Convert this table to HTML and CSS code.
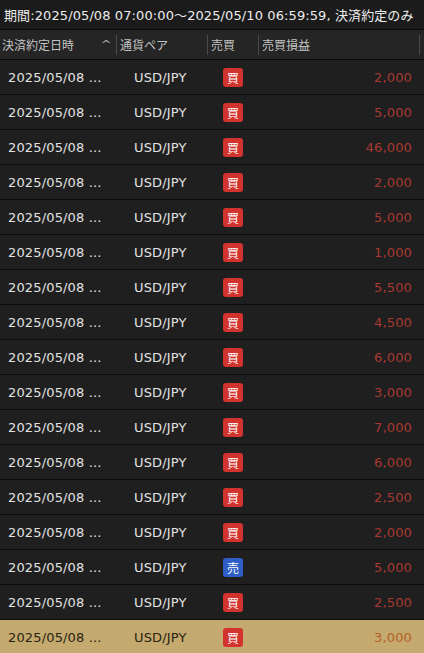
FILE: index.html
```html
<!DOCTYPE html>
<html lang="ja">
<head>
<meta charset="utf-8">
<link rel="stylesheet" href="styles.css">
</head>
<body>
<div class="period">期間:2025/05/08 07:00:00～2025/05/10 06:59:59, 決済約定のみ</div>
<div class="head">
  <div class="hc c1"><span>決済約定日時</span><span class="caret">^</span></div>
  <div class="hc c2">通貨ペア</div>
  <div class="hc c3">売買</div>
  <div class="hc c4">売買損益</div>
</div>
<div class="rows">
  <div class="row"><span class="date">2025/05/08 ...</span><span class="pair">USD/JPY</span><span class="side"><i class="badge buy">買</i></span><span class="pl">2,000</span></div>
  <div class="row"><span class="date">2025/05/08 ...</span><span class="pair">USD/JPY</span><span class="side"><i class="badge buy">買</i></span><span class="pl">5,000</span></div>
  <div class="row"><span class="date">2025/05/08 ...</span><span class="pair">USD/JPY</span><span class="side"><i class="badge buy">買</i></span><span class="pl">46,000</span></div>
  <div class="row"><span class="date">2025/05/08 ...</span><span class="pair">USD/JPY</span><span class="side"><i class="badge buy">買</i></span><span class="pl">2,000</span></div>
  <div class="row"><span class="date">2025/05/08 ...</span><span class="pair">USD/JPY</span><span class="side"><i class="badge buy">買</i></span><span class="pl">5,000</span></div>
  <div class="row"><span class="date">2025/05/08 ...</span><span class="pair">USD/JPY</span><span class="side"><i class="badge buy">買</i></span><span class="pl">1,000</span></div>
  <div class="row"><span class="date">2025/05/08 ...</span><span class="pair">USD/JPY</span><span class="side"><i class="badge buy">買</i></span><span class="pl">5,500</span></div>
  <div class="row"><span class="date">2025/05/08 ...</span><span class="pair">USD/JPY</span><span class="side"><i class="badge buy">買</i></span><span class="pl">4,500</span></div>
  <div class="row"><span class="date">2025/05/08 ...</span><span class="pair">USD/JPY</span><span class="side"><i class="badge buy">買</i></span><span class="pl">6,000</span></div>
  <div class="row"><span class="date">2025/05/08 ...</span><span class="pair">USD/JPY</span><span class="side"><i class="badge buy">買</i></span><span class="pl">3,000</span></div>
  <div class="row"><span class="date">2025/05/08 ...</span><span class="pair">USD/JPY</span><span class="side"><i class="badge buy">買</i></span><span class="pl">7,000</span></div>
  <div class="row"><span class="date">2025/05/08 ...</span><span class="pair">USD/JPY</span><span class="side"><i class="badge buy">買</i></span><span class="pl">6,000</span></div>
  <div class="row"><span class="date">2025/05/08 ...</span><span class="pair">USD/JPY</span><span class="side"><i class="badge buy">買</i></span><span class="pl">2,500</span></div>
  <div class="row"><span class="date">2025/05/08 ...</span><span class="pair">USD/JPY</span><span class="side"><i class="badge buy">買</i></span><span class="pl">2,000</span></div>
  <div class="row"><span class="date">2025/05/08 ...</span><span class="pair">USD/JPY</span><span class="side"><i class="badge sell">売</i></span><span class="pl">5,000</span></div>
  <div class="row"><span class="date">2025/05/08 ...</span><span class="pair">USD/JPY</span><span class="side"><i class="badge buy">買</i></span><span class="pl">2,500</span></div>
  <div class="row selected"><span class="date">2025/05/08 ...</span><span class="pair">USD/JPY</span><span class="side"><i class="badge buy">買</i></span><span class="pl">3,000</span></div>
</div>
</body>
</html>
```

FILE: styles.css
```css
html, body {
  margin: 0;
  padding: 0;
  background: #1e1e1e;
  overflow: hidden;
}
body {
  font-family: "DejaVu Sans", "Noto Sans CJK JP", sans-serif;
  color: #e2e2e2;
  width: 424px;
}
.period {
  height: 29px;
  border-bottom: 1px solid #0a0a0a;
  background: #1b1b1b;
  display: flex;
  align-items: center;
  padding-left: 4px;
  font-size: 13px;
  letter-spacing: 0.1px;
  white-space: nowrap;
  color: #ececec;
}
.head {
  height: 29px;
  border-bottom: 1px solid #0a0a0a;
  background: #252525;
  display: grid;
  grid-template-columns: 117px 91px 51px 161px 4px;
  align-items: center;
  font-size: 12px;
  color: #c4c4c4;
  font-family: "Noto Sans CJK JP", sans-serif;
}
.hc {
  height: 20px;
  display: flex;
  align-items: center;
  border-right: 1px solid #4a4a4a;
  white-space: nowrap;
}
.c1 { padding-left: 2px; justify-content: space-between; padding-right: 6px; }
.c2 { padding-left: 3px; }
.c3 { padding-left: 3px; }
.c4 { padding-left: 3px; }
.caret {
  font-family: "DejaVu Sans", sans-serif;
  font-size: 10px;
  color: #aaa;
  transform: scaleX(1.3);
}
.row {
  height: 34px;
  border-bottom: 1px solid #0a0a0a;
  background: #1f1f1f;
  display: grid;
  grid-template-columns: 117px 91px 51px 153px;
  align-items: center;
  font-size: 13px;
  letter-spacing: 0.15px;
}
.date { padding-left: 8px; white-space: nowrap; }
.pair { padding-left: 17px; }
.side { padding-left: 15px; display: flex; }
.pl {
  text-align: right;
  color: #a83932;
}
.badge {
  font-style: normal;
  width: 20px;
  height: 19px;
  border-radius: 3px;
  display: flex;
  align-items: center;
  justify-content: center;
  font-family: "Noto Sans CJK JP", sans-serif;
  font-size: 12px;
  letter-spacing: 0;
  color: #fff;
}
.buy { background: #d3332f; }
.sell { background: #2f5fc6; }
.selected { background: #c4aa6e; color: #2a2212; }
.selected .pl { color: #b5602c; }
```
